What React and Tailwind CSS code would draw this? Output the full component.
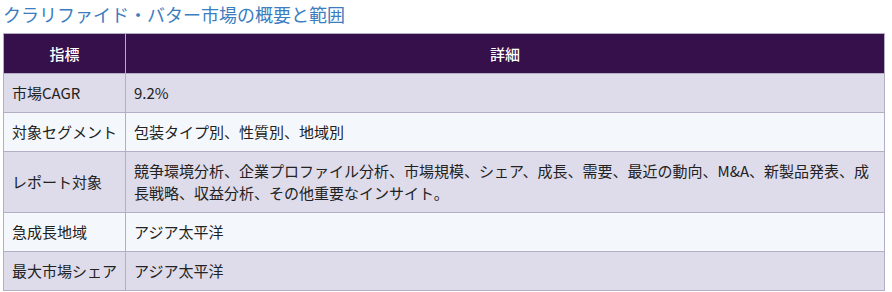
const rows = [
  { label: '市場CAGR', detail: '9.2%' },
  { label: '対象セグメント', detail: '包装タイプ別、性質別、地域別' },
  {
    label: 'レポート対象',
    detail:
      '競争環境分析、企業プロファイル分析、市場規模、シェア、成長、需要、最近の動向、M&A、新製品発表、成長戦略、収益分析、その他重要なインサイト。',
  },
  { label: '急成長地域', detail: 'アジア太平洋' },
  { label: '最大市場シェア', detail: 'アジア太平洋' },
]

const font = { fontFamily: '"Noto Sans CJK JP", "Noto Sans", sans-serif' }

export default function App() {
  return (
    <div className="bg-white w-[892px] h-[292px] pl-[3px] pt-0" style={font}>
      <h2 className="text-[18px] leading-[26px] text-[#3b7dc0] font-normal h-[33px] pt-[1px]">
        クラリファイド・バター市場の概要と範囲
      </h2>
      <table className="w-[882px] border-collapse text-[15px] leading-[22px] text-[#222]">
        <thead>
          <tr className="bg-[#36104a] text-white">
            <th className="w-[122px] h-[40px] border border-[#b3adc5] font-medium text-center">指標</th>
            <th className="h-[40px] border border-[#b3adc5] font-medium text-center">詳細</th>
          </tr>
        </thead>
        <tbody>
          {rows.map((row, i) => (
            <tr key={row.label} className={i % 2 === 0 ? 'bg-[#dedbea]' : 'bg-[#f4f8fc]'}>
              <td className="border border-[#b3adc5] px-2 py-2 align-middle whitespace-nowrap">{row.label}</td>
              <td className="border border-[#b3adc5] px-2 py-2 align-middle">{row.detail}</td>
            </tr>
          ))}
        </tbody>
      </table>
    </div>
  )
}
